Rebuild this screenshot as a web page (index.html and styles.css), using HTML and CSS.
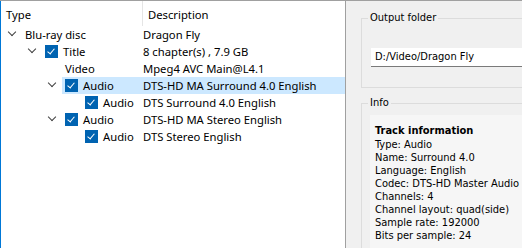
FILE: index.html
```html
<!DOCTYPE html>
<html lang="en">
<head>
    <meta charset="UTF-8">
    <title>Tracks</title>
    <link rel="stylesheet" href="styles.css">
</head>
<body>
    <div class="window">
        <div class="tree">
            <div class="tree-head">
                <div class="col-type">Type</div>
                <div class="col-desc">Description</div>
            </div>
            <div class="row l0">
                <div class="type"><span class="exp"></span><span class="name">Blu-ray disc</span></div>
                <div class="desc">Dragon Fly</div>
            </div>
            <div class="row l1">
                <div class="type"><span class="exp"></span><span class="check"></span><span class="name">Title</span></div>
                <div class="desc">8 chapter(s) , 7.9 GB</div>
            </div>
            <div class="row l2">
                <div class="type"><span class="exp none"></span><span class="name">Video</span></div>
                <div class="desc">Mpeg4 AVC Main@L4.1</div>
            </div>
            <div class="row l2 sel">
                <div class="type"><span class="exp"></span><span class="check"></span><span class="name">Audio</span></div>
                <div class="desc">DTS-HD MA Surround 4.0 English</div>
            </div>
            <div class="row l3">
                <div class="type"><span class="exp none"></span><span class="check"></span><span class="name">Audio</span></div>
                <div class="desc">DTS Surround 4.0 English</div>
            </div>
            <div class="row l2">
                <div class="type"><span class="exp"></span><span class="check"></span><span class="name">Audio</span></div>
                <div class="desc">DTS-HD MA Stereo English</div>
            </div>
            <div class="row l3">
                <div class="type"><span class="exp none"></span><span class="check"></span><span class="name">Audio</span></div>
                <div class="desc">DTS Stereo English</div>
            </div>
        </div>
        <div class="side">
            <div class="group output">
                <div class="legend">Output folder</div>
                <div class="path">D:/Video/Dragon Fly</div>
            </div>
            <div class="group info">
                <div class="legend">Info</div>
                <div class="info-text">
                    <b>Track information</b>
                    <div>Type: Audio</div>
                    <div>Name: Surround 4.0</div>
                    <div>Language: English</div>
                    <div>Codec: DTS-HD Master Audio</div>
                    <div>Channels: 4</div>
                    <div>Channel layout: quad(side)</div>
                    <div>Sample rate: 192000</div>
                    <div>Bits per sample: 24</div>
                </div>
            </div>
        </div>
    </div>
</body>
</html>
```

FILE: styles.css
```css
body {
    margin: 0;
    width: 522px;
    height: 248px;
    overflow: hidden;
    background: #f0f0f0;
}

.window {
    display: flex;
    height: 248px;
    border-top: 1px solid #a0a0a0;
    box-sizing: border-box;
}

/* left tree view */
.tree {
    width: 346px;
    box-sizing: border-box;
    background: #fff;
    border-left: 1px solid #0078d7;
    border-right: 1px solid #a0a0a0;
    font-family: 'Noto Sans', sans-serif;
    font-size: 11.25px;
    color: #000;
}

.tree-head {
    display: flex;
    height: 25px;
    align-items: center;
}

.col-type {
    width: 136px;
    padding-left: 5px;
    height: 25px;
    line-height: 27px;
    border-right: 1px solid #e5e5e5;
}

.col-desc {
    padding-left: 5px;
    padding-top: 2px;
}

.row {
    display: flex;
    height: 17px;
    line-height: 18px;
}

.type {
    width: 142px;
    display: flex;
    align-items: center;
    box-sizing: border-box;
    flex-shrink: 0;
}

.l1 .type { padding-left: 20px; }
.l2 .type { padding-left: 40px; }
.l3 .type { padding-left: 60px; }

.row.sel {
    background: linear-gradient(to right, transparent 61px, #cce8ff 61px);
}

.exp {
    width: 9px;
    height: 5px;
    margin-left: 7px;
    margin-right: 8px;
    flex-shrink: 0;
    position: relative;
}

.exp::before {
    content: "";
    display: block;
    width: 5px;
    height: 5px;
    border-right: 1.5px solid #404040;
    border-bottom: 1.5px solid #404040;
    transform: translate(1px, -3px) rotate(45deg);
}

.exp.none::before {
    display: none;
}

.check {
    width: 13px;
    height: 13px;
    background: #0063b1;
    margin-right: 5px;
    flex-shrink: 0;
    position: relative;
}

.check::before {
    content: "";
    position: absolute;
    left: 4px;
    top: 2px;
    width: 3px;
    height: 6px;
    border-right: 1px solid #fff;
    border-bottom: 1px solid #fff;
    transform: rotate(40deg);
}

.desc {
    white-space: nowrap;
}

/* right side */
.side {
    flex: 1;
    padding: 17px 0 0 15px;
    overflow: hidden;
    font-family: 'DejaVu Sans Condensed', 'Liberation Sans', sans-serif;
    font-size: 11px;
    color: #000;
}

.group {
    border: 1px solid #dcdcdc;
    border-right: none;
    position: relative;
    margin-right: -10px;
}

.legend {
    position: absolute;
    top: -8px;
    left: 6px;
    padding: 0 2px;
    background: #f0f0f0;
    line-height: 14px;
}

.output {
    height: 70px;
    box-sizing: border-box;
    padding-top: 29px;
    padding-left: 9px;
}

.path {
    background: #fff;
    height: 18px;
    line-height: 18px;
    padding-left: 4px;
    border-bottom: 1px solid #7a7a7a;
}

.info {
    margin-top: 15px;
    height: 200px;
    padding: 11px 0 0 8px;
}

.info-text {
    background: #f6f6f6;
    padding: 9px 0 0 5px;
    line-height: 13px;
    height: 200px;
    white-space: nowrap;
}

.info-text b {
    display: block;
    line-height: 14px;
}
```
